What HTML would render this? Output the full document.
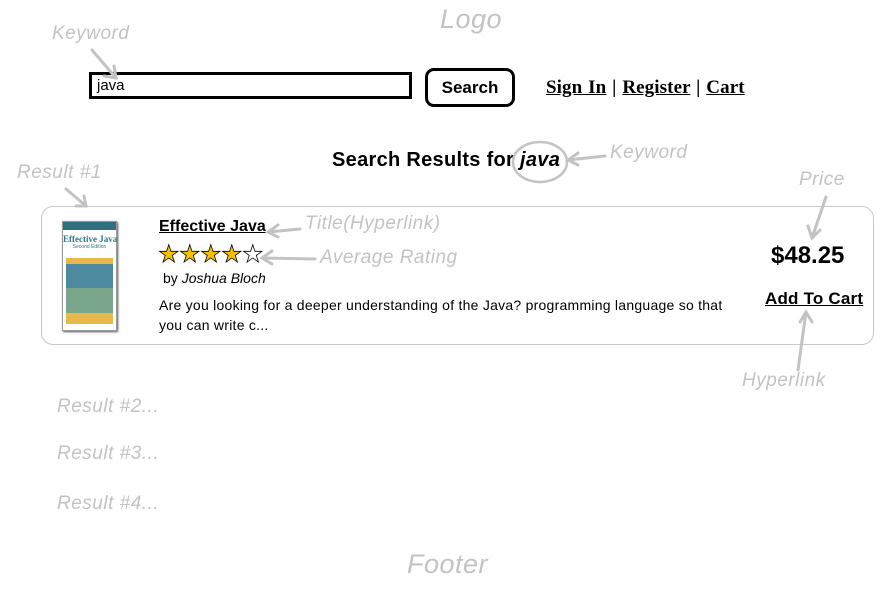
<!DOCTYPE html>
<html><head><meta charset="utf-8">
<style>
*{margin:0;padding:0;box-sizing:border-box}
body{width:891px;height:599px;background:#fff;position:relative;overflow:hidden;font-family:"Liberation Sans",sans-serif;color:#000}
.a{position:absolute;white-space:nowrap}
.note{color:#c3c3c3;font-style:italic;font-family:"Liberation Sans",sans-serif;letter-spacing:0.5px}
.input{left:89px;top:72px;width:323px;height:27px;border:3px solid #000;font-size:15px;padding-left:5px;line-height:21px}
.btn{left:425px;top:68px;width:90px;height:39px;border:3px solid #000;border-radius:9px;font-weight:bold;font-size:17px;text-align:center;line-height:33px}
.links{left:546px;top:77px;font-family:"Liberation Serif",serif;font-weight:bold;font-size:19px;letter-spacing:0.1px;word-spacing:1px}
.card{left:41px;top:206px;width:833px;height:139px;border:1px solid #c8c8c8;border-radius:12px}
.st{display:inline-block;width:21px;text-align:center}
</style></head><body>
<div class="a note" style="left:440px;top:4px;font-size:27px">Logo</div>
<div class="a note" style="left:52px;top:23px;font-size:19px">Keyword</div>
<div class="a input">java</div>
<div class="a btn">Search</div>
<div class="a links"><u>Sign In</u> | <u>Register</u> | <u>Cart</u></div>
<div class="a" style="left:332px;top:149px;font-size:20px;font-weight:bold;letter-spacing:0.3px">Search Results for <i>java</i></div>
<div class="a note" style="left:610px;top:142px;font-size:19px">Keyword</div>
<div class="a note" style="left:17px;top:162px;font-size:19px">Result #1</div>
<div class="a note" style="left:799px;top:169px;font-size:19px">Price</div>
<div class="a card"></div>
<div class="a" style="left:62px;top:221px;width:55px;height:110px;background:#fff;box-shadow:1px 1px 2px #555;border:1px solid #999">
 <div style="height:8px;background:#2f6f80"></div>
 <div style="font-size:9px;font-weight:bold;color:#2f7a8a;text-align:center;margin-top:4px;font-family:'Liberation Serif',serif">Effective Java</div>
 <div style="font-size:5px;color:#2f7a8a;text-align:center">Second Edition</div>
 <div style="margin:8px 3px 0;height:66px;background:linear-gradient(#e8b84a 0 6px,#4d8aa0 6px 30px,#7aa68c 30px 55px,#e8b84a 55px)"></div>
</div>
<div class="a" style="left:159px;top:218px;font-size:16px;font-weight:bold;text-decoration:underline">Effective Java</div>
<div class="a note" style="left:305px;top:213px;font-size:19px">Title(Hyperlink)</div>
<div class="a" style="left:158px;top:243px;font-size:24px;line-height:24px;color:#f5c000;-webkit-text-stroke:0.8px #000"><span class="st">★</span><span class="st">★</span><span class="st">★</span><span class="st">★</span><span class="st" style="color:#fff">★</span></div>
<div class="a note" style="left:320px;top:247px;font-size:19px">Average Rating</div>
<div class="a" style="left:163px;top:270px;font-size:14px">by <i>Joshua Bloch</i></div>
<div class="a" style="left:159px;top:295px;font-size:14px;line-height:20px;letter-spacing:0.25px">Are you looking for a deeper understanding of the Java? programming language so that<br>you can write c...</div>
<div class="a" style="left:771px;top:242px;font-size:24px;font-weight:bold">$48.25</div>
<div class="a" style="left:765px;top:289px;font-size:17px;font-weight:bold;text-decoration:underline;letter-spacing:0.2px">Add To Cart</div>
<div class="a note" style="left:742px;top:370px;font-size:19px">Hyperlink</div>
<div class="a note" style="left:57px;top:396px;font-size:19px">Result #2...</div>
<div class="a note" style="left:57px;top:443px;font-size:19px">Result #3...</div>
<div class="a note" style="left:57px;top:493px;font-size:19px">Result #4...</div>
<div class="a note" style="left:407px;top:549px;font-size:27px">Footer</div>
<svg class="a" style="left:0;top:0" width="891" height="599" fill="none" stroke="#c3c3c3" stroke-width="3" stroke-linecap="round">
<path d="M92 50 L116 78 M104 76 L116 78 L114 66"/>
<ellipse cx="540" cy="162" rx="27" ry="20" stroke-width="2.5"/>
<path d="M605 156 L568 160 M578 153 L568 160 L578 165"/>
<path d="M66 189 L86 206 M76 206 L86 206 L84 196"/>
<path d="M826 197 L812 238 M808 226 L812 238 L820 230"/>
<path d="M300 229 L268 232 M278 225 L268 232 L278 237"/>
<path d="M315 259 L262 258 M272 251 L262 258 L272 264"/>
<path d="M798 370 L806 312 M800 322 L806 312 L812 322"/>
</svg>
</body></html>
